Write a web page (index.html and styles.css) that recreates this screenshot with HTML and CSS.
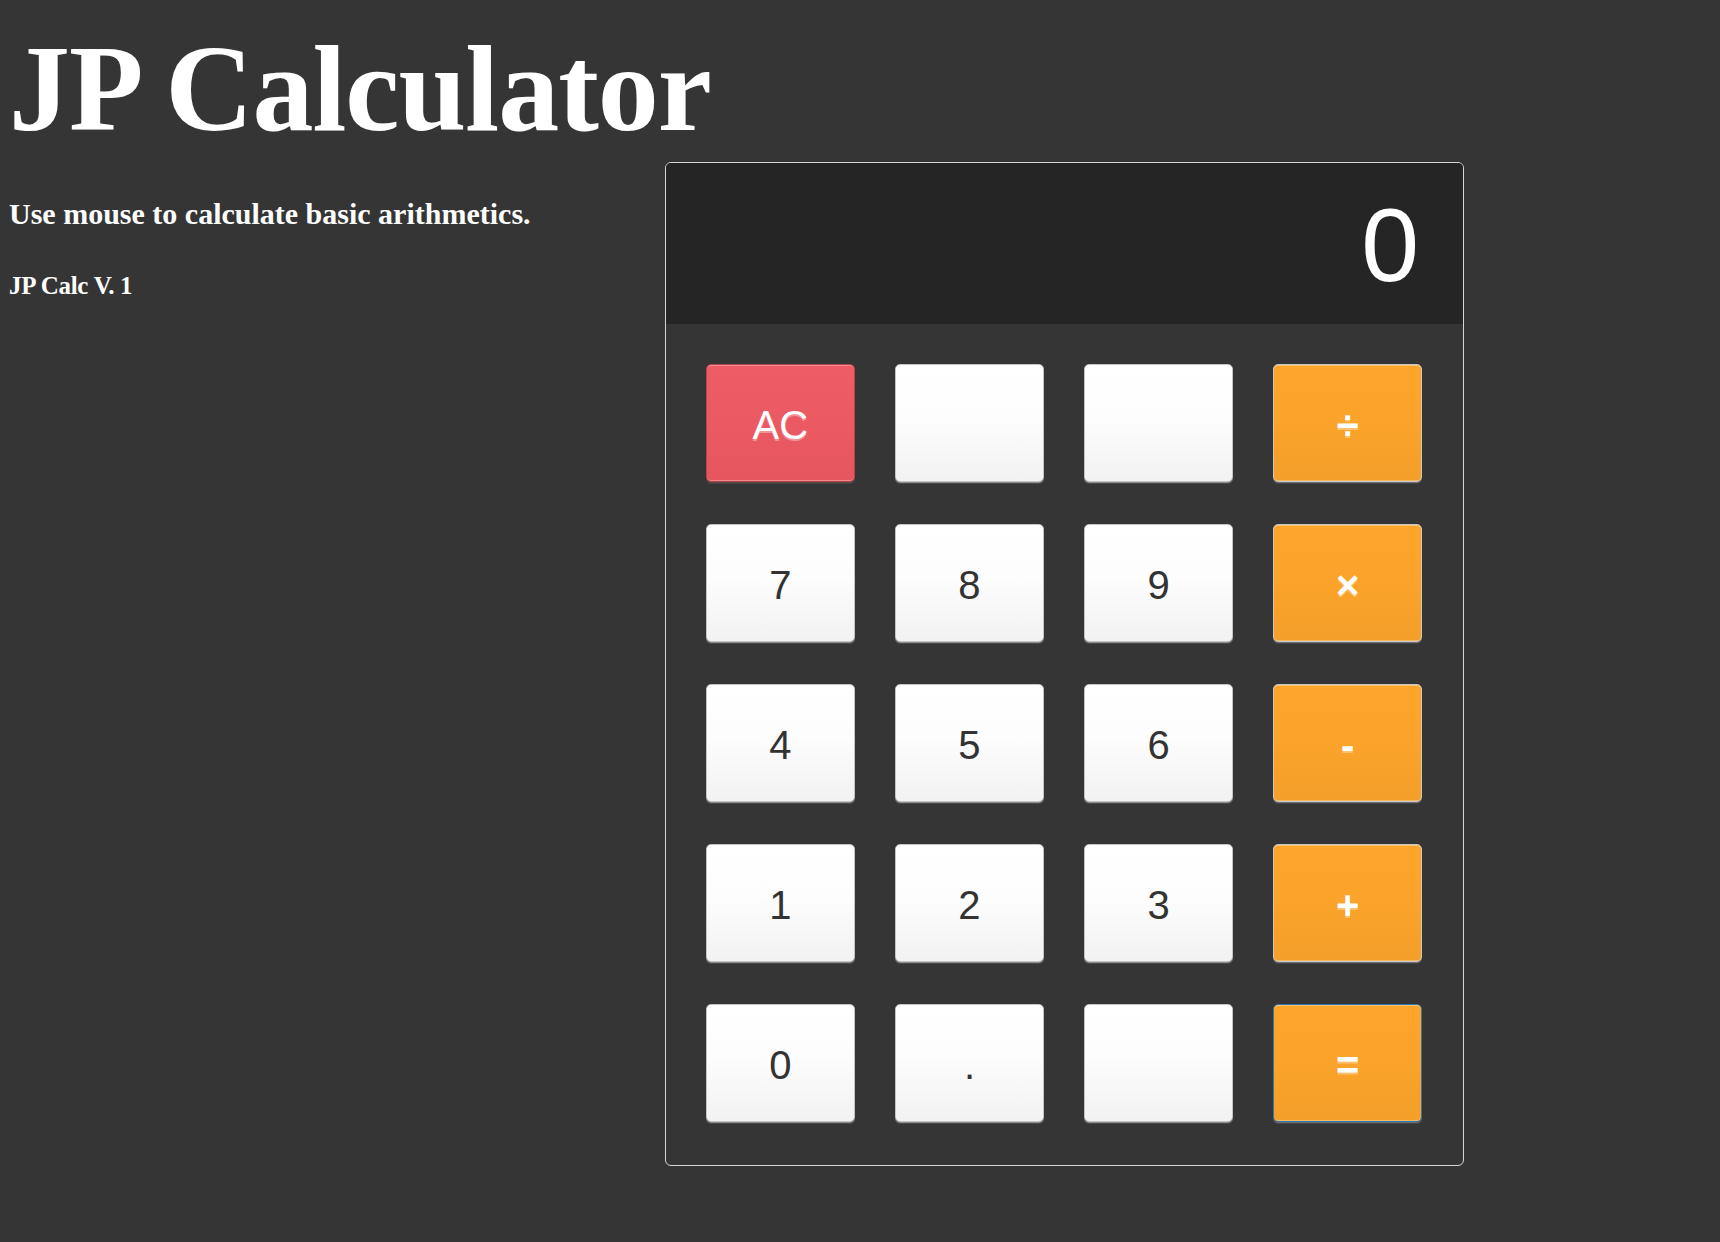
FILE: index.html
```html
<!DOCTYPE html>
<html lang="en">
<head>
<meta charset="utf-8">
<title>JP Calculator</title>
<link rel="stylesheet" href="styles.css">
</head>
<body>
<h1 class="title">JP Calculator</h1>
<div class="main">
  <div class="info">
    <p class="subtitle">Use mouse to calculate basic arithmetics.</p>
    <p class="version">JP Calc V. 1</p>
  </div>
  <div class="calc">
    <div class="display">0</div>
    <div class="keys">
      <button class="key key-clear">AC</button>
      <button class="key"></button>
      <button class="key"></button>
      <button class="key key-op">÷</button>
      <button class="key">7</button>
      <button class="key">8</button>
      <button class="key">9</button>
      <button class="key key-op">×</button>
      <button class="key">4</button>
      <button class="key">5</button>
      <button class="key">6</button>
      <button class="key key-op">-</button>
      <button class="key">1</button>
      <button class="key">2</button>
      <button class="key">3</button>
      <button class="key key-op">+</button>
      <button class="key">0</button>
      <button class="key">.</button>
      <button class="key"></button>
      <button class="key key-op key-eq">=</button>
    </div>
  </div>
</div>
</body>
</html>
```
FILE: styles.css
```css
html, body {
  margin: 0;
  background: #353535;
}

body {
  padding: 0 0 0 9px;
  color: #fff;
  font-family: "Liberation Serif", "Times New Roman", serif;
}

.title {
  margin: 0;
  padding-top: 19px;
  font-size: 122px;
  line-height: 140px;
  font-weight: bold;
  letter-spacing: -1px;
}

.main {
  display: flex;
  margin-top: 3px;
}

.info {
  flex: none;
  width: 656px;
}

.subtitle {
  margin: 34px 0 0;
  font-size: 30px;
  line-height: 36px;
  font-weight: bold;
}

.version {
  margin: 40px 0 0;
  font-size: 25px;
  line-height: 28px;
  font-weight: bold;
  letter-spacing: -0.3px;
}

.calc {
  flex: none;
  width: 799px;
  box-sizing: border-box;
  border: 1px solid #d6d6d6;
  border-radius: 6px;
  overflow: hidden;
}

.display {
  box-sizing: border-box;
  height: 161px;
  padding: 4px 44px 0;
  background: #252525;
  text-align: right;
  font-family: "Liberation Sans", Arial, sans-serif;
  font-size: 104px;
  line-height: 157px;
  color: #fff;
}

.keys {
  display: grid;
  grid-template-columns: repeat(4, 1fr);
  column-gap: 40.5px;
  row-gap: 42px;
  padding: 40px 41px 43px 40px;
}

.key {
  height: 118px;
  margin: 0;
  padding: 5px 0 0;
  border: 1px solid #c4c4c4;
  border-radius: 5px;
  background: linear-gradient(#ffffff 0%, #fdfdfd 45%, #f2f2f2 100%);
  box-shadow: 0 1px 0 #8c8c8c, 0 2px 0 #4a4a4a;
  color: #333;
  font-family: "Liberation Sans", Arial, sans-serif;
  font-size: 40px;
  font-weight: normal;
}

.key-op {
  border-color: #c8c8c8;
  background: linear-gradient(#fda52b 0%, #fba32a 50%, #f39f2a 100%);
  box-shadow: inset 0 1px 0 rgba(255, 255, 255, 0.35), inset 0 -1px 0 rgba(255, 255, 255, 0.3), 0 1px 0 #6f6f6f, 0 2px 0 #444;
  color: #fff;
  font-weight: bold;
  text-shadow: 0 2px 0 rgba(255, 255, 255, 0.35);
}

.key-clear {
  border-color: #b8424a;
  background: linear-gradient(#ee5c66 0%, #eb5a63 50%, #e6565f 100%);
  box-shadow: inset 0 1px 0 rgba(255, 255, 255, 0.3), inset 0 -1px 0 rgba(255, 255, 255, 0.3), 0 1px 0 #5a4446, 0 2px 0 #444;
  color: #fff;
  text-shadow: 0 2px 0 rgba(255, 255, 255, 0.35);
}

.key-eq {
  border-color: #2e78ad;
}
```
